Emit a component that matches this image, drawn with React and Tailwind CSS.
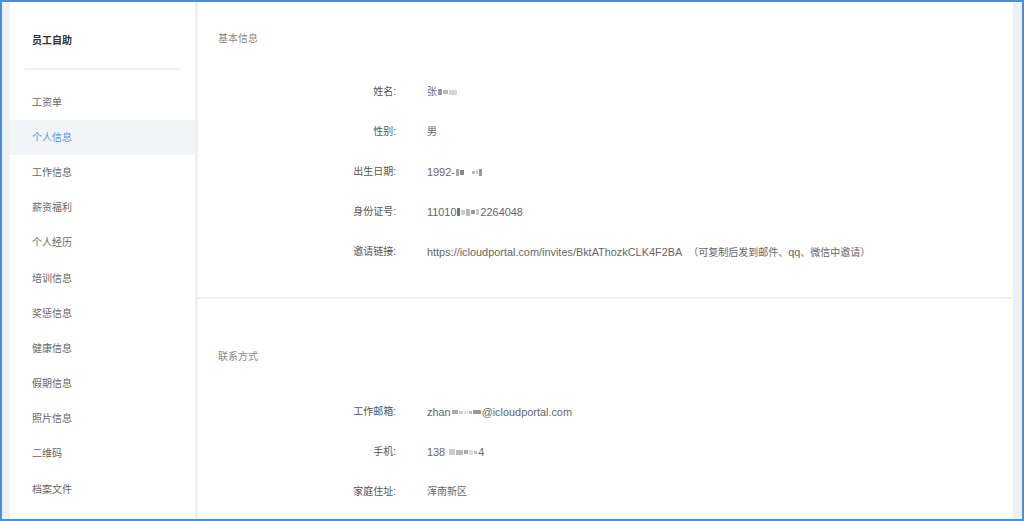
import React from "react";

const font = { fontFamily: '"Liberation Sans", "Noto Sans CJK SC", sans-serif' };

// little pixel blocks standing in for the masked parts of the values
function Mask({ cells }) {
  return (
    <span className="inline-flex items-center gap-[1px] align-middle mx-[1px]">
      {cells.map((c, i) => (
        <span
          key={i}
          className={`inline-block ${c[2]}`}
          style={{ width: c[0], height: c[1] }}
        />
      ))}
    </span>
  );
}

// latin text renders a touch wider in the original
function L({ children }) {
  return <span className="text-[10.9px]">{children}</span>;
}

const menu = [
  "工资单",
  "个人信息",
  "工作信息",
  "薪资福利",
  "个人经历",
  "培训信息",
  "奖惩信息",
  "健康信息",
  "假期信息",
  "照片信息",
  "二维码",
  "档案文件",
];

function Row({ label, children }) {
  return (
    <div className="h-[40px] flex items-center">
      <div className="w-[198px] text-right text-[#555]">{label}</div>
      <div className="pl-[31px] text-[#666] flex items-center whitespace-nowrap">{children}</div>
    </div>
  );
}

export default function App() {
  return (
    <div
      className="w-[1024px] h-[521px] border-2 border-[#4a8fd8] bg-[#eef1f4] flex pl-[8px] pr-[9px] gap-[3px] overflow-hidden text-[10px] leading-[14px]"
      style={font}
    >
      {/* SIDEBAR */}
      <aside className="w-[185px] shrink-0 bg-white flex flex-col">
        <div className="pt-[32px] pl-[22px] font-bold text-[#333]">员工自助</div>
        <div className="mt-[20px] mx-[15px] h-[2px] bg-[#eef1f4]" />
        <nav className="mt-[15px] flex flex-col">
          {menu.map((m) => (
            <div
              key={m}
              className={`h-[35.2px] flex items-center pl-[22px] ${
                m === "个人信息" ? "bg-[#f2f5f8] text-[#4d9be6]" : "text-[#666]"
              }`}
            >
              {m}
            </div>
          ))}
        </nav>
      </aside>

      {/* MAIN */}
      <main className="flex-1 flex flex-col gap-[2px] overflow-hidden">
        <section className="h-[295px] shrink-0 bg-white">
          <div className="pt-[30px] pl-[20px] text-[#888]">基本信息</div>
          <div className="mt-[26px]">
            <Row label="姓名:">
              张
              <Mask cells={[[4, 6, "bg-[#999]"], [5, 4, "bg-[#bbb]"], [8, 5, "bg-[#d6d6d6]"]]} />
            </Row>
            <Row label="性别:">男</Row>
            <Row label="出生日期:">
              <L>1992-</L>
              <Mask cells={[[3, 7, "bg-[#aaa]"], [4, 5, "bg-[#888]"]]} />
              <span className="w-[6px]" />
              <Mask cells={[[3, 3, "bg-[#bbb]"], [2, 4, "bg-[#ccc]"], [3, 7, "bg-[#999]"]]} />
            </Row>
            <Row label="身份证号:">
              <L>11010</L>
              <Mask cells={[[3, 8, "bg-[#777]"], [4, 5, "bg-[#ccc]"], [4, 7, "bg-[#bbb]"], [4, 4, "bg-[#999]"], [3, 6, "bg-[#ccc]"]]} />
              <L>2264048</L>
            </Row>
            <Row label="邀请链接:">
              <L>https://icloudportal.com/invites/BktAThozkCLK4F2BA</L>
              <span className="pl-[6px]">（可复制后发到邮件、<L>qq</L>、微信中邀请）</span>
            </Row>
          </div>
        </section>

        <section className="flex-1 bg-white">
          <div className="pt-[51px] pl-[20px] text-[#888]">联系方式</div>
          <div className="mt-[28px]">
            <Row label="工作邮箱:">
              <L>zhan</L>
              <Mask cells={[[6, 4, "bg-[#aaa]"], [4, 3, "bg-[#ccc]"], [4, 3, "bg-[#e0e0e0]"], [3, 3, "bg-[#bbb]"], [8, 4, "bg-[#999]"]]} />
              <L>@icloudportal.com</L>
            </Row>
            <Row label="手机:">
              <L>138</L>
              <span className="w-[3px]" />
              <Mask cells={[[6, 6, "bg-[#ccc]"], [7, 5, "bg-[#bbb]"], [4, 4, "bg-[#aaa]"], [4, 5, "bg-[#ddd]"], [3, 3, "bg-[#bbb]"]]} />
              <L>4</L>
            </Row>
            <Row label="家庭住址:">浑南新区</Row>
          </div>
        </section>
      </main>
    </div>
  );
}
